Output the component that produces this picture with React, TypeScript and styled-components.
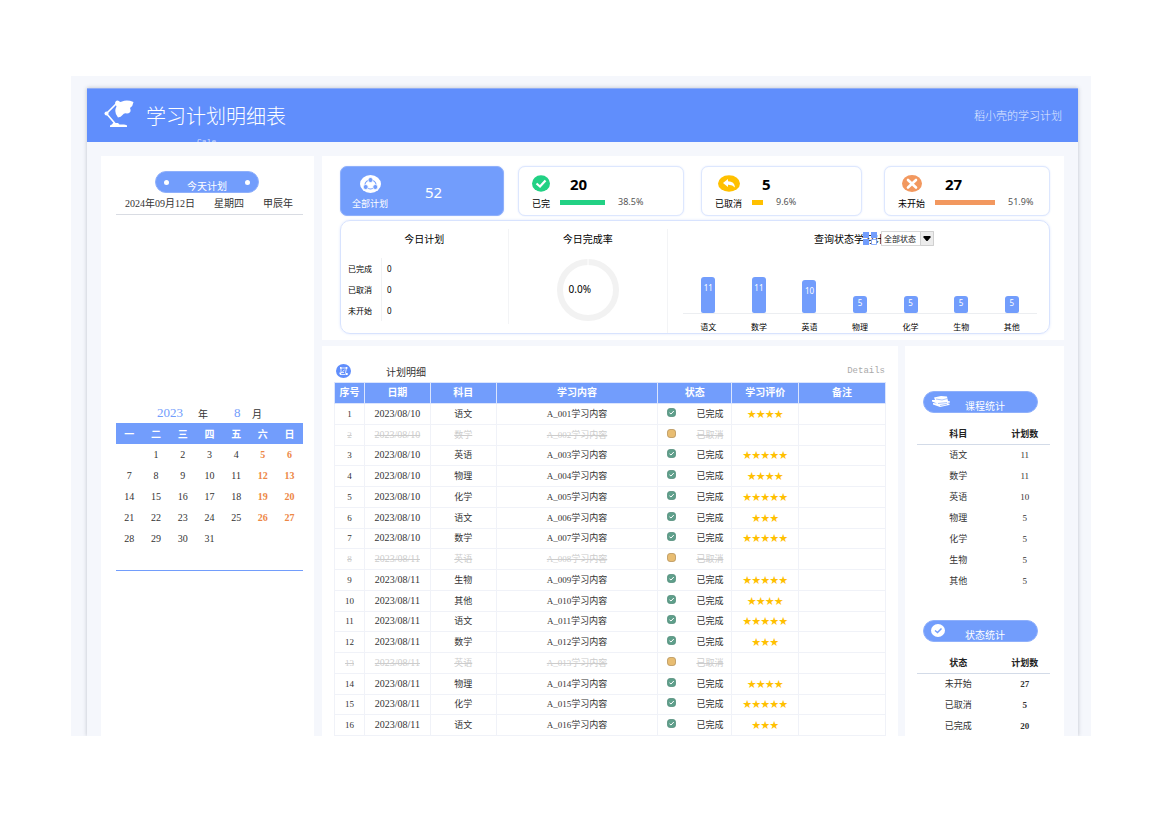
import React from "react";
import styled, { createGlobalStyle, css } from "styled-components";

const BLUE = "#729dfc";
const SONG = '"Liberation Serif", "Noto Sans CJK SC", serif';
const UI = '"Noto Sans", "Noto Sans CJK SC", sans-serif';

const GlobalStyle = createGlobalStyle`
  * { box-sizing: border-box; }
  body { margin: 0; background: #fff; font-family: ${SONG}; color: #333; }
  table { border-collapse: collapse; border-spacing: 0; table-layout: fixed; width: 100%; }
  th, td { padding: 0; }
  h1, h2, h3, p { margin: 0; font-weight: 400; }
`;

const Page = styled.div`
  padding: 76px 79px 91px 71px;
`;

const Sheet = styled.main`
  background: #f5f7fc;
  padding: 12px 13px 0 16px;
  overflow: hidden;
`;

const Board = styled.div`
  background: #f5f7fc;
  box-shadow: 0 0 4px rgba(60, 70, 90, 0.3);
`;

const Header = styled.header`
  height: 54px;
  background: #608efc;
  border-top: 1px solid #8facf5;
  color: #fff;
  display: flex;
  align-items: center;
  padding: 0 16px 0 17px;
  overflow: hidden;
  svg { margin-bottom: 3px; }
`;

const TitleBlock = styled.div`
  margin-left: 12px;
  padding-top: 20px;
`;

const Title = styled.h1`
  font-size: 20px;
  line-height: 24px;
  font-weight: 300;
`;

const Subtitle = styled.p`
  font: 8px/10px "Liberation Mono", monospace;
  padding-left: 51px;
  margin-top: 8px;
  color: #d3dffd;
`;

const Owner = styled.span`
  margin-left: auto;
  padding-bottom: 2px;
  font-size: 11px;
  font-weight: 300;
  color: #e2eaff;
`;

const Content = styled.div`
  display: grid;
  grid-template-columns: minmax(0, 213fr) minmax(0, 742fr);
  column-gap: 8px;
  padding: 14px 14px 0;
`;

const Panel = styled.section`
  background: #fff;
`;

const SidePanel = styled(Panel)`
  padding: 15px 11px 0 15px;
`;

const Pill = styled.h2<{ $width: number }>`
  width: ${(p) => p.$width}px;
  height: 22px;
  border-radius: 11px;
  background: ${BLUE};
  border: 1px solid #8fb0fb;
  color: #fff;
  font: 400 10px/12px ${UI};
  display: flex;
  align-items: center;
`;

const TodayPill = styled(Pill)`
  margin: 0 0 0 39px;
  justify-content: space-between;
  padding: 0 8px;
`;

const PillText = styled.span`
  padding-top: 7px;
`;

const Dot = styled.i`
  width: 5px;
  height: 5px;
  border-radius: 50%;
  background: #fff;
`;

const DateRow = styled.div`
  display: flex;
  gap: 19px;
  padding-left: 9px;
  font-size: 10px;
  line-height: 21px;
  border-bottom: 1px solid #d9dce3;
`;

const Agenda = styled.div`
  min-height: 188px;
`;

const MonthRow = styled.div`
  display: flex;
  align-items: center;
  height: 20px;
  padding-left: 41px;
  font-size: 10px;
`;

const MonthNumber = styled.b`
  font-size: 13px;
  font-weight: 400;
  color: ${BLUE};
  width: 41px;
`;

const MonthUnit = styled.span`
  width: 36px;
  & + ${MonthNumber} { width: 18px; }
`;

const Calendar = styled.table`
  font-size: 10px;
  text-align: center;
  border-bottom: 1px solid ${BLUE};
  margin-bottom: 8px;
  th {
    height: 21px;
    background: ${BLUE};
    color: #fff;
    font-weight: 700;
  }
  td { height: 21px; }
  td:nth-child(n + 6) { color: #ed8745; font-weight: 700; }
`;

const Main = styled.div`
  display: flex;
  flex-direction: column;
  gap: 6px;
`;

const Overview = styled(Panel)`
  padding: 10px 14px 6px 18px;
`;

const Cards = styled.div`
  display: grid;
  grid-template-columns: 178fr 183fr 183fr 166fr;
  margin-bottom: 4px;
`;

const Card = styled.article<{ $gap: number; $filled?: boolean }>`
  height: 50px;
  margin-right: ${(p) => p.$gap}px;
  border-radius: 7px;
  border: 1px solid #dde7fe;
  box-shadow: 0 0 2px #dfe8fe;
  background: #fff;
  color: #000;
  font: 9px/12px ${UI};
  display: flex;
  gap: 10px;
  padding: 8px 0 0 13px;
  ${(p) =>
    p.$filled &&
    css`
      background: ${BLUE};
      border-color: #8fb0fb;
      color: #fff;
      gap: 37px;
      padding-left: 11px;
    `}
`;

const CardSide = styled.div`
  display: flex;
  flex-direction: column;
  align-items: center;
  gap: 5px;
  svg { display: block; height: 18px; }
`;

const CardBody = styled.div``;

const CardNumber = styled.div`
  font-size: 15px;
  line-height: 18px;
  font-weight: 700;
  padding-left: 10px;
`;

const CardTotal = styled.div`
  font-size: 15px;
  line-height: 34px;
  font-weight: 400;
`;

const ShareRow = styled.div`
  display: flex;
  align-items: center;
  gap: 13px;
  height: 18px;
  color: #555;
`;

const ShareBar = styled.i<{ $color: string }>`
  height: 5px;
  background: ${(p) => p.$color};
`;

const Summary = styled.div`
  height: 114px;
  border: 1px solid #d8e3fe;
  border-radius: 10px;
  box-shadow: 0 0 3px #e0e8fd;
  font-family: ${UI};
  color: #000;
  display: grid;
  grid-template-columns: 167fr 160fr 383fr;
  padding: 8px 0 0;
`;

const SummaryCell = styled.div`
  position: relative;
  height: 95px;
  & + & { border-left: 1px solid #f3f4f6; }
`;

const SummaryTitle = styled.h3`
  font-size: 10px;
  line-height: 20px;
  text-align: center;
`;

const TodayList = styled.dl`
  margin: 9px 0 0;
  padding-left: 7px;
  display: grid;
  grid-template-columns: 33px 20px;
  font-size: 8px;
  line-height: 21px;
  dd { margin: 0; padding-left: 5px; border-left: 1px solid #f0f1f3; }
  dt { white-space: nowrap; }
`;

const Ring = styled.div`
  position: relative;
  width: 62px;
  margin: 0 auto;
  svg { display: block; }
`;

const RingValue = styled.span`
  position: absolute;
  inset: 0 16px 2px 0;
  display: flex;
  align-items: center;
  justify-content: center;
  font-size: 10px;
`;

const ChartCell = styled(SummaryCell)`
  padding: 0 12px 0 15px;
  height: 104px;
`;

const ChartTitle = styled(SummaryTitle)`
  padding-right: 12px;
`;

const Slicer = styled.div`
  position: absolute;
  top: 2px;
  left: 195px;
  display: flex;
  align-items: center;
`;

const StatusFilter = styled.label`
  display: flex;
  margin-left: 4px;
  position: relative;
  svg { position: absolute; right: 0; top: 0; pointer-events: none; }
`;

const StatusSelect = styled.select`
  appearance: none;
  width: 53px;
  height: 15px;
  padding: 0 0 0 2px;
  border: 1px solid #d8d8d8;
  border-radius: 0;
  background: #fff;
  color: #222;
  font: 8px/12px ${UI};
`;

const Bars = styled.div`
  display: grid;
  grid-template-columns: repeat(7, 1fr);
  align-items: end;
  height: 65px;
  border-bottom: 1px solid #eceef1;
`;

const Bar = styled.div<{ $value: number }>`
  width: 14px;
  height: ${(p) => Math.round(p.$value * 3.3)}px;
  margin: 0 auto;
  padding-top: ${(p) => (p.$value > 5 ? 6 : 2)}px;
  border-radius: 3px 3px 2px 2px;
  background: ${BLUE};
  color: #fff;
  text-align: center;
  font-size: 8px;
  line-height: 10px;
`;

const BarLabels = styled.div`
  display: grid;
  grid-template-columns: repeat(7, 1fr);
  text-align: center;
  font-size: 8px;
  line-height: 12px;
  padding-top: 7px;
`;

const Lower = styled.div`
  flex: 1;
  display: grid;
  grid-template-columns: minmax(0, 576fr) minmax(0, 159fr);
  column-gap: 7px;
`;

const Details = styled(Panel)`
  padding: 14px 12px 0 12px;
`;

const DetailsHead = styled.div`
  display: flex;
  align-items: center;
  height: 22px;
  padding: 0 1px 0 2px;
`;

const DetailsTitle = styled.h2`
  font-size: 10px;
  margin-left: 35px;
`;

const DetailsNote = styled.span`
  margin-left: auto;
  font: 9px/12px "Liberation Mono", monospace;
  color: #aaa;
`;

const PlanTable = styled.table`
  height: 354px;
  font-size: 9px;
  line-height: 12px;
  text-align: center;
  th {
    height: 21px;
    background: ${BLUE};
    color: #fff;
    font-size: 10px;
    font-weight: 700;
    border: 1px solid #dbe5fd;
  }
  td { border: 1px solid #f0f2f8; }
`;

const PlanRow = styled.tr<{ $cancelled: boolean }>`
  ${(p) =>
    p.$cancelled &&
    css`
      color: #ccc;
      text-decoration: line-through;
    `}
`;

const DateCell = styled.td`
  font-size: 10px;
`;

const StarCell = styled.td`
  color: #ffc000;
  font-family: "Noto Sans CJK SC", sans-serif;
`;

const Status = styled.div`
  display: flex;
  align-items: center;
  padding-left: 9px;
  gap: 20px;
  svg { margin-bottom: 3px; }
`;

const Stats = styled(Panel)`
  padding: 45px 14px 0 12px;
`;

const StatPill = styled(Pill)`
  margin: 0 auto 0 6px;
  padding-left: 7px;
  ${PillText} { padding-top: 8px; }
`;

const PillIcon = styled.span`
  width: 34px;
  svg { display: block; }
`;

const StatTable = styled.table<{ $bold?: boolean }>`
  margin: 11px 0 29px;
  font-size: 9px;
  line-height: 12px;
  text-align: center;
  th { height: 20px; border-bottom: 1px solid #d3dbe8; color: #222; }
  td { height: 21px; }
  td:last-child { font-weight: ${(p) => (p.$bold ? 700 : 400)}; }
`;

const LastStatTable = styled(StatTable)`
  margin-bottom: 0;
`;

const LampIcon = () => (
  <svg width="30" height="28" viewBox="0 0 30 28" aria-hidden="true">
    <path d="M13 3 L2.500 13.500 L11 23.500" fill="none" stroke="#fff" strokeWidth="1.600" />
    <circle cx="2.500" cy="13.500" r="2" fill="#fff" />
    <path d="M11 3 Q12-.5 15 1 Q16 2.500 18 1.500 Q23 -.5 29.500 2 Q29 6 26 8 Q28 13 23 13.500 Q20 12.500 18.500 15 Q17 17 14 17.500 Q9.500 12 12.500 6.500 Z" fill="#fff" />
    <path d="M6 27 V26 Q6 24.500 8 24.500 L9 23 H14 L15.500 24.500 H20 Q23 24.500 23 26 V27 Z" fill="#fff" />
  </svg>
);

const ShareIcon = () => (
  <svg width="21" height="18" viewBox="0 0 21 18" aria-hidden="true">
    <ellipse cx="10.500" cy="9" rx="10.500" ry="9" fill="#fff" />
    <ellipse cx="10.500" cy="9.500" rx="5.500" ry="4.500" fill="none" stroke={BLUE} strokeWidth="1.100" />
    <g fill={BLUE} stroke="#fff" strokeWidth=".8">
      <circle cx="10.500" cy="5" r="2.500" />
      <circle cx="5.700" cy="12" r="2.500" />
      <circle cx="15.300" cy="12" r="2.500" />
    </g>
  </svg>
);

const DoneIcon = () => (
  <svg width="18" height="18" viewBox="0 0 18 18" aria-hidden="true">
    <ellipse cx="9" cy="8.500" rx="9" ry="8.300" fill="#22d184" />
    <path d="M4.500 8.500 L8 11.500 L13.500 5.500" fill="none" stroke="#fff" strokeWidth="2.200" />
  </svg>
);

const UndoIcon = () => (
  <svg width="22" height="18" viewBox="0 0 22 18" aria-hidden="true">
    <ellipse cx="11" cy="8.500" rx="11" ry="8.300" fill="#ffc000" />
    <path d="M5 8 L10 4 V6.300 Q16.500 6.300 17 12.500 Q14.500 9.500 10 9.700 V12 Z" fill="#fff" />
  </svg>
);

const CrossIcon = () => (
  <svg width="20" height="18" viewBox="0 0 20 18" aria-hidden="true">
    <ellipse cx="10" cy="8.500" rx="10" ry="8.500" fill="#f2985f" />
    <path d="M6 5 L14 12.500 M14 5 L6 12.500" stroke="#fff" strokeWidth="2.600" strokeLinecap="round" />
  </svg>
);

const NodesIcon = () => (
  <svg width="15" height="14" viewBox="0 0 15 14" aria-hidden="true">
    <ellipse cx="7.500" cy="7" rx="7.500" ry="7" fill="#608efc" />
    <g stroke="#fff" fill="none" strokeWidth=".8">
      <path d="M5 4 H10.500 L9.500 9 M5 4 V8.500 H8 M4 10.500 H9" />
      <path d="M6.500 7.500 L8.500 6" />
    </g>
    <path d="M4 3 h1.500 v1.700 h-1.500z M9.700 3 h1.700 v1.700 h-1.700z M9.500 9 h2.200 v2 h-2.200z M3.500 8.500 h1.700 v1.700 h-1.700z" fill="#fff" />
  </svg>
);

const TilesIcon = () => (
  <svg width="14" height="13" viewBox="0 0 14 13" aria-hidden="true">
    <path d="M0 0 h6 v6 h-6z M8 0 h6 v6 h-6z M0 7 h6 v6 h-6z" fill={BLUE} />
    <path d="M8.500 7.500 h5 v5 h-5z" fill="#fff" stroke={BLUE} strokeWidth=".8" />
  </svg>
);

const ArrowButton = () => (
  <svg width="14" height="15" viewBox="0 0 14 15" aria-hidden="true">
    <path d="M.5 .5 h13 v14 h-13z" fill="#ececec" stroke="#d0d0d0" />
    <path d="M3.500 5 H10.500 V6.500 L7.500 10 H6.500 L3.500 6.500 Z" fill="#000" />
  </svg>
);

const BooksIcon = () => (
  <svg width="20" height="14" viewBox="0 0 20 14" aria-hidden="true">
    <path d="M3 2.500 L10 1 L16 1.500 L17 6 L19 6.500 V7.500 L16 8 L19 9 L18 10 L9 12 L2 9.500 V8 L6 8.500 L1 6.500 V5 L4 5 Z" fill="#fff" />
    <path d="M5 4 L11 5 L16.500 3.500 M7 8.500 L16 7.500 M9 10.500 L16 9.200" stroke={BLUE} strokeWidth=".6" fill="none" />
  </svg>
);

const CheckIcon = () => (
  <svg width="15" height="14" viewBox="0 0 15 14" aria-hidden="true">
    <ellipse cx="7" cy="6.500" rx="7" ry="6.500" fill="#fff" />
    <path d="M4 6.500 L6.500 8.500 L10.500 4.500" stroke={BLUE} strokeWidth="1.500" fill="none" />
  </svg>
);

const StateIcon = ({ done }: { done: boolean }) => (
  <svg width="9" height="9" viewBox="0 0 9 9" aria-hidden="true">
    <rect x=".5" y=".5" width="8" height="8" rx="2.500" fill={done ? "#5f9f8b" : "#e8bd72"} stroke={done ? "#558f7d" : "#b8945a"} strokeWidth=".8" />
    {done && <path d="M2.500 4.800 L4 6 L6.800 3" stroke="#fff" fill="none" />}
  </svg>
);

const weekdays = ["一", "二", "三", "四", "五", "六", "日"];
const weeks = [0, 1, 2, 3, 4].map((w) =>
  weekdays.map((_, d) => {
    const day = w * 7 + d;
    return day >= 1 && day <= 31 ? String(day) : "";
  })
);

const cards = [
  { icon: <DoneIcon />, label: "已完", count: 20, share: 38.5, color: "#22d184", gap: 17 },
  { icon: <UndoIcon />, label: "已取消", count: 5, share: 9.6, color: "#ffc000", gap: 22 },
  { icon: <CrossIcon />, label: "未开始", count: 27, share: 51.9, color: "#f2985f", gap: 0 },
];

const subjects: [string, number][] = [
  ["语文", 11], ["数学", 11], ["英语", 10], ["物理", 5], ["化学", 5], ["生物", 5], ["其他", 5],
];

const states: [string, number][] = [["未开始", 27], ["已取消", 5], ["已完成", 20]];

// subject and star rating of each plan; a rating of 0 marks a cancelled plan
const plans: [string, number][] = [
  ["语文", 4], ["数学", 0], ["英语", 5], ["物理", 4], ["化学", 5], ["语文", 3], ["数学", 5], ["英语", 0],
  ["生物", 5], ["其他", 4], ["语文", 5], ["数学", 3], ["英语", 0], ["物理", 4], ["化学", 5], ["语文", 3],
];

const StatRows = ({ head, rows }: { head: string; rows: [string, number][] }) => (
  <>
    <colgroup>
      <col style={{ width: "62%" }} />
      <col />
    </colgroup>
    <thead>
      <tr><th>{head}</th><th>计划数</th></tr>
    </thead>
    <tbody>
      {rows.map(([name, n]) => (
        <tr key={name}><td>{name}</td><td>{n}</td></tr>
      ))}
    </tbody>
  </>
);

const columns: [string, number][] = [
  ["序号", 30], ["日期", 66], ["科目", 66], ["学习内容", 162], ["状态", 74], ["学习评价", 67], ["备注", 87],
];

export default function App() {
  return (
    <Page lang="zh-CN">
      <GlobalStyle />
      <Sheet>
        <Board>
          <Header>
            <LampIcon />
            <TitleBlock>
              <Title>学习计划明细表</Title>
              <Subtitle>Cale</Subtitle>
            </TitleBlock>
            <Owner>稻小壳的学习计划</Owner>
          </Header>
          <Content>
            <SidePanel>
              <TodayPill $width={104}>
                <Dot /><PillText>今天计划</PillText><Dot />
              </TodayPill>
              <DateRow>
                <span>2024年09月12日</span><span>星期四</span><span>甲辰年</span>
              </DateRow>
              <Agenda />
              <MonthRow>
                <MonthNumber>2023</MonthNumber><MonthUnit>年</MonthUnit>
                <MonthNumber>8</MonthNumber><MonthUnit>月</MonthUnit>
              </MonthRow>
              <Calendar>
                <thead>
                  <tr>{weekdays.map((d) => <th key={d}>{d}</th>)}</tr>
                </thead>
                <tbody>
                  {weeks.map((week, i) => (
                    <tr key={i}>{week.map((d, j) => <td key={j}>{d}</td>)}</tr>
                  ))}
                  <tr><td colSpan={7} /></tr>
                </tbody>
              </Calendar>
            </SidePanel>
            <Main>
              <Overview>
                <Cards>
                  <Card $gap={14} $filled>
                    <CardSide><ShareIcon />全部计划</CardSide>
                    <CardTotal>52</CardTotal>
                  </Card>
                  {cards.map((c) => (
                    <Card key={c.label} $gap={c.gap}>
                      <CardSide>{c.icon}{c.label}</CardSide>
                      <CardBody>
                        <CardNumber>{c.count}</CardNumber>
                        <ShareRow>
                          <ShareBar $color={c.color} style={{ width: Math.round(c.share * 1.16) }} />
                          {c.share}%
                        </ShareRow>
                      </CardBody>
                    </Card>
                  ))}
                </Cards>
                <Summary>
                  <SummaryCell>
                    <SummaryTitle>今日计划</SummaryTitle>
                    <TodayList>
                      {["已完成", "已取消", "未开始"].map((s) => (
                        <React.Fragment key={s}><dt>{s}</dt><dd>0</dd></React.Fragment>
                      ))}
                    </TodayList>
                  </SummaryCell>
                  <SummaryCell>
                    <SummaryTitle>今日完成率</SummaryTitle>
                    <Ring>
                      <svg width="62" height="82" viewBox="0 0 62 82" aria-hidden="true">
                        <circle cx="31" cy="41" r="28" fill="none" stroke="#f2f2f2" strokeWidth="6" />
                        <path d="M31 9 V17" stroke="#fff" />
                      </svg>
                      <RingValue>0.0%</RingValue>
                    </Ring>
                  </SummaryCell>
                  <ChartCell>
                    <ChartTitle>查询状态学习计划</ChartTitle>
                    <Slicer>
                      <TilesIcon />
                      <StatusFilter>
                        <StatusSelect aria-label="状态"><option>全部状态</option></StatusSelect>
                        <ArrowButton />
                      </StatusFilter>
                    </Slicer>
                    <Bars>
                      {subjects.map(([s, n]) => <Bar key={s} $value={n}>{n}</Bar>)}
                    </Bars>
                    <BarLabels>
                      {subjects.map(([s]) => <span key={s}>{s}</span>)}
                    </BarLabels>
                  </ChartCell>
                </Summary>
              </Overview>
              <Lower>
                <Details>
                  <DetailsHead>
                    <NodesIcon />
                    <DetailsTitle>计划明细</DetailsTitle>
                    <DetailsNote>Details</DetailsNote>
                  </DetailsHead>
                  <PlanTable>
                    <colgroup>
                      {columns.map(([name, w]) => <col key={name} style={{ width: `${(w / 552) * 100}%` }} />)}
                    </colgroup>
                    <thead>
                      <tr>{columns.map(([name]) => <th key={name}>{name}</th>)}</tr>
                    </thead>
                    <tbody>
                      {plans.map(([subject, stars], i) => (
                        <PlanRow key={i} $cancelled={stars === 0}>
                          <td>{i + 1}</td>
                          <DateCell>{i < 7 ? "2023/08/10" : "2023/08/11"}</DateCell>
                          <td>{subject}</td>
                          <td>{`A_${String(i + 1).padStart(3, "0")}学习内容`}</td>
                          <td>
                            <Status>
                              <StateIcon done={stars > 0} />
                              <span>{stars > 0 ? "已完成" : "已取消"}</span>
                            </Status>
                          </td>
                          <StarCell>{"★".repeat(stars)}</StarCell>
                          <td />
                        </PlanRow>
                      ))}
                    </tbody>
                  </PlanTable>
                </Details>
                <Stats>
                  <StatPill $width={115}><PillIcon><BooksIcon /></PillIcon><PillText>课程统计</PillText></StatPill>
                  <StatTable><StatRows head="科目" rows={subjects} /></StatTable>
                  <StatPill $width={115}><PillIcon><CheckIcon /></PillIcon><PillText>状态统计</PillText></StatPill>
                  <LastStatTable $bold><StatRows head="状态" rows={states} /></LastStatTable>
                </Stats>
              </Lower>
            </Main>
          </Content>
        </Board>
      </Sheet>
    </Page>
  );
}
